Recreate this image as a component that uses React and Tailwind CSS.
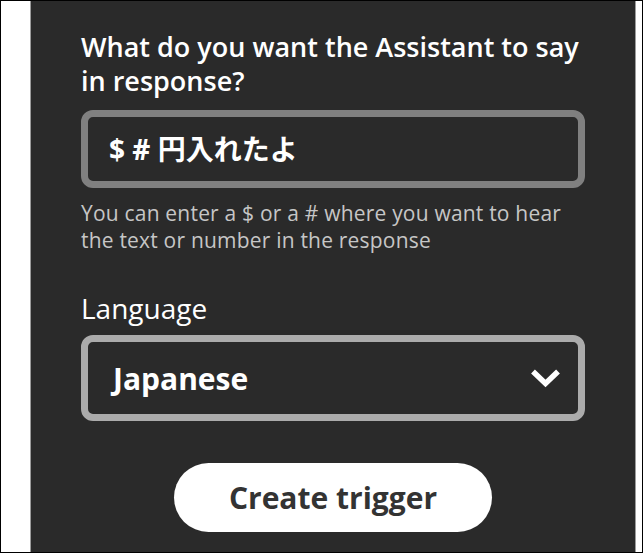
import React from "react";

const font = { fontFamily: "'Open Sans', 'Noto Sans CJK JP', sans-serif" };

const Chevron = () => (
  <svg width="31" height="20" viewBox="0 0 31 20" fill="none">
    <polyline
      points="3,3.5 15.5,15.5 28,3.5"
      stroke="#ffffff"
      strokeWidth="5.5"
      strokeLinejoin="miter"
      strokeLinecap="butt"
    />
  </svg>
);

export default function App() {
  return (
    <div
      className="flex h-[553px] w-[643px] border border-black bg-white"
      style={font}
    >
      <div className="w-[29px] shrink-0" />
      <div className="flex w-[606px] shrink-0 flex-col border-x border-[#9c9c9c] bg-[#2a2a2a] px-[50px] pt-[29px]">
        <h1 className="text-[27px] font-semibold leading-[34px] text-white">
          What do you want the Assistant to say
          <br />
          in response?
        </h1>

        <div className="mt-[12px] flex h-[78px] items-center rounded-[12px] border-[7px] border-[#808080] pl-[21px]">
          <span className="text-[28px] font-bold text-white">$ # 円入れたよ</span>
        </div>

        <p className="mt-[12px] text-[21px] leading-[27px] tracking-[0.2px] text-[#c6c6c6]">
          You can enter a $ or a # where you want to hear
          <br />
          the text or number in the response
        </p>

        <label className="mt-[38px] text-[28px] font-medium leading-[33px] text-white">
          Language
        </label>

        <div className="mt-[10px] flex h-[86px] items-center justify-between rounded-[12px] border-[7px] border-[#ababab] pl-[25px] pr-[17px]">
          <span className="text-[30px] font-bold text-white">Japanese</span>
          <Chevron />
        </div>

        <div className="mt-[42px] flex justify-center">
          <button className="flex h-[69px] w-[318px] items-center justify-center rounded-full bg-white text-[30px] font-bold text-[#333333]">
            Create trigger
          </button>
        </div>
      </div>
      <div className="flex-1" />
    </div>
  );
}
